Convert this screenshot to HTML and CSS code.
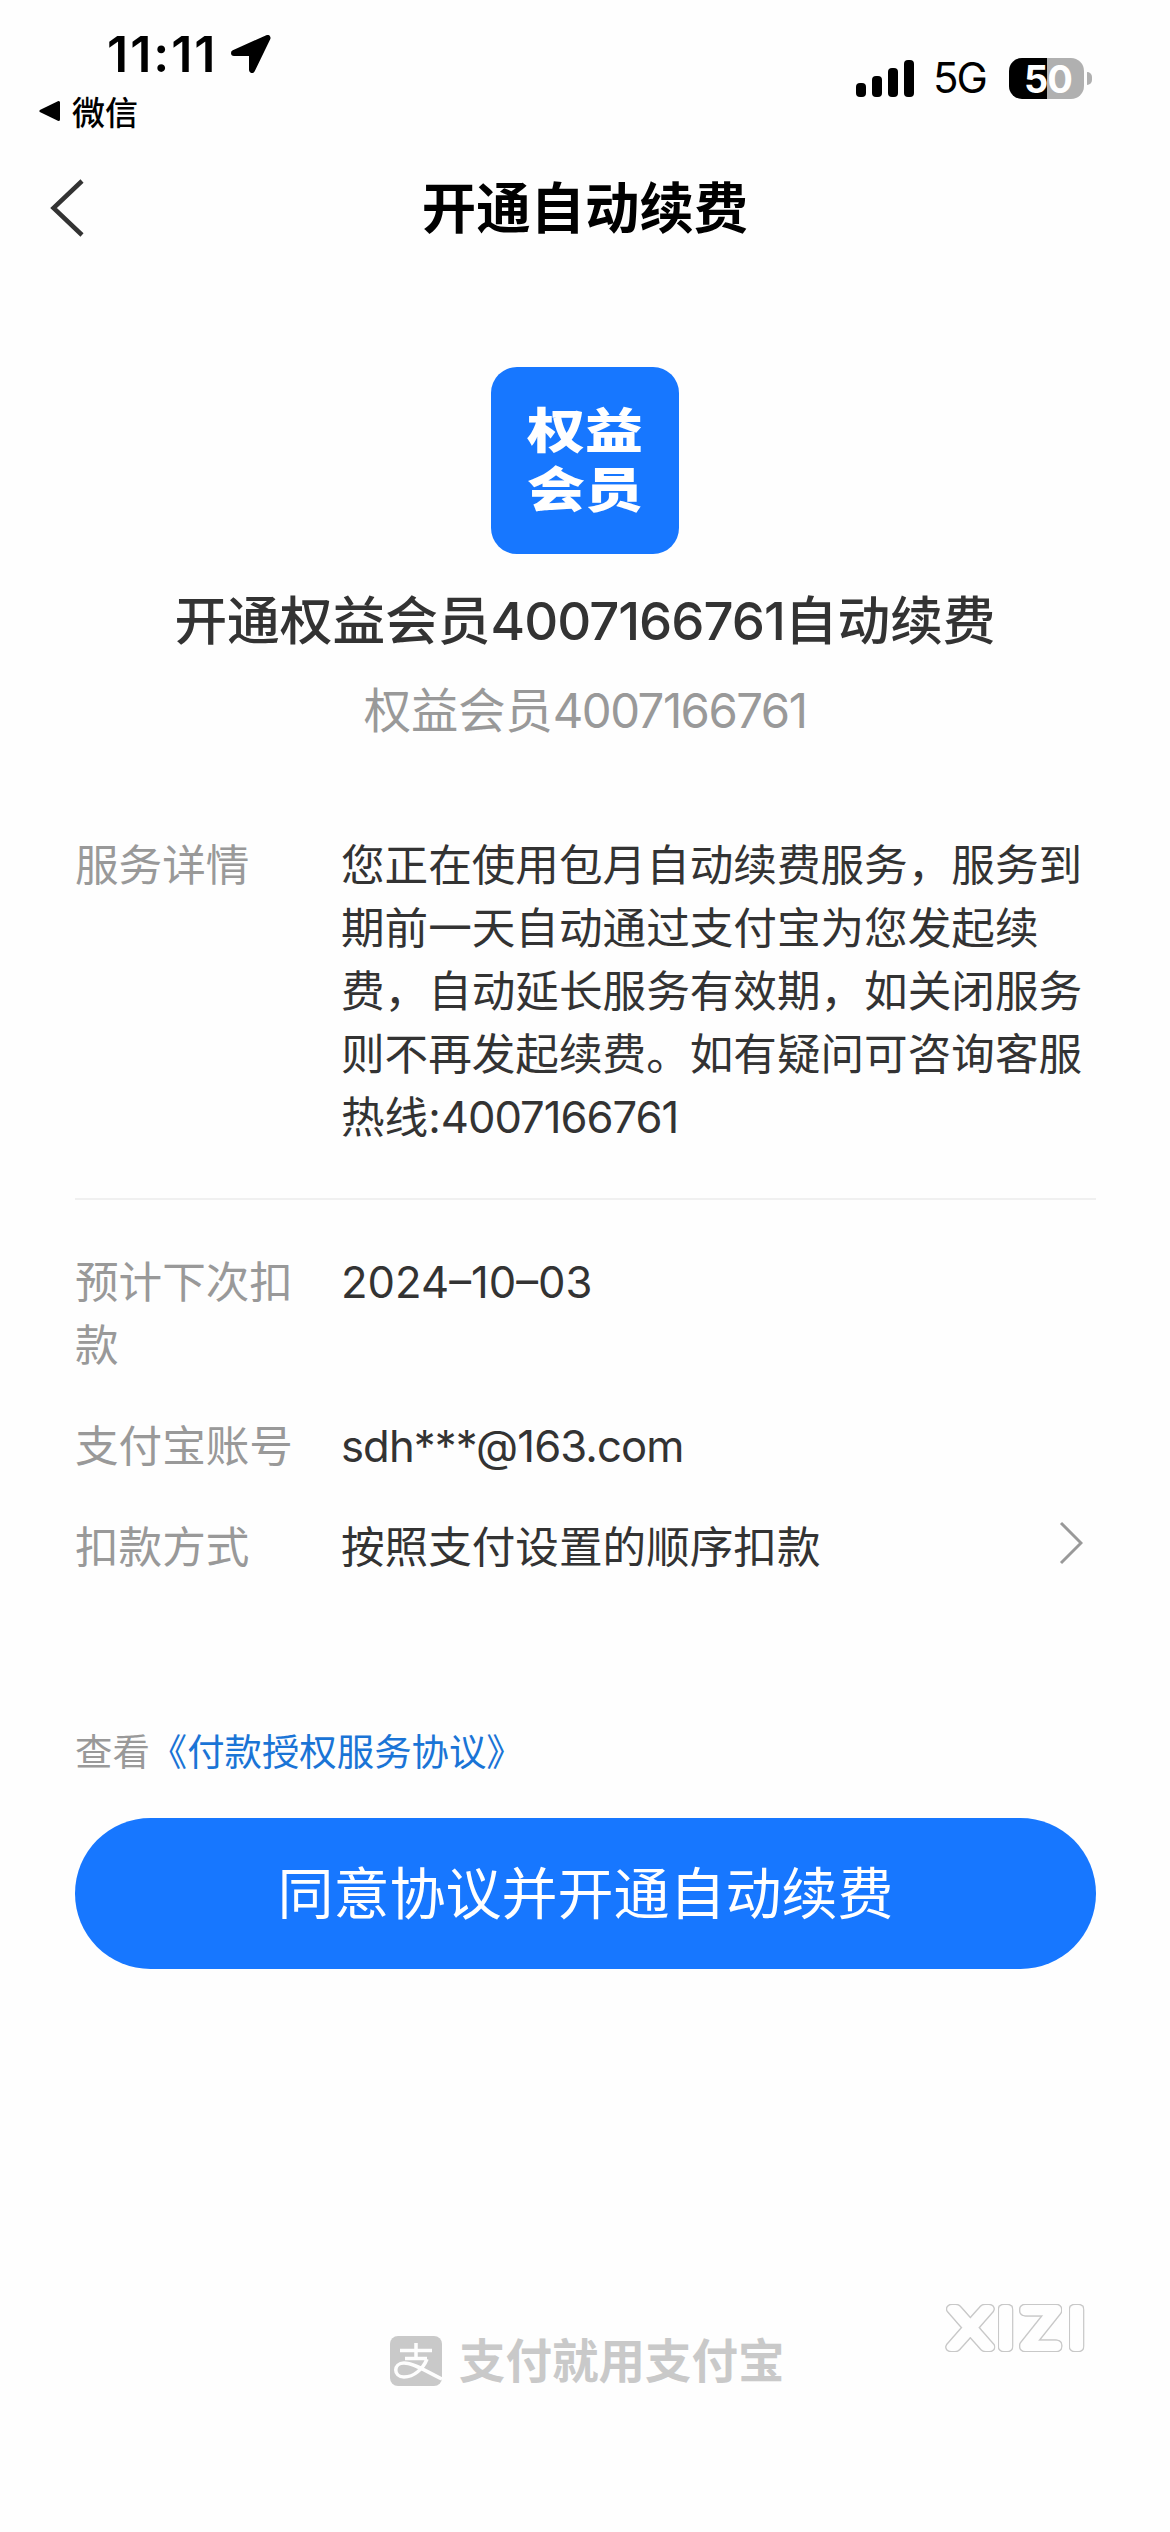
FILE: index.html
```html
<!DOCTYPE html>
<html lang="zh-CN">
<head>
    <meta charset="UTF-8">
    <meta name="viewport" content="width=device-width, initial-scale=1.0">
    <title>开通自动续费</title>
    <link rel="stylesheet" href="styles.css">
</head>
<body>
    <header class="status">
        <div class="status-left">
            <div class="clock">
                <span class="time">11:11</span>
                <svg width="40" height="38" viewBox="0 0 40 38">
                    <path d="M36.500 3 L21 35 V18 H3 Z" fill="#000" stroke="#000" stroke-width="6" stroke-linejoin="round"/>
                </svg>
            </div>
            <div class="back-app">
                <svg width="22" height="22" viewBox="0 0 22 22">
                    <path d="M2 11 L19.500 2.500 V19.500 Z" fill="#000" stroke="#000" stroke-width="3" stroke-linejoin="round"/>
                </svg>
                <span>微信</span>
            </div>
        </div>
        <div class="status-right">
            <div class="signal">
                <i class="bar bar1"></i>
                <i class="bar bar2"></i>
                <i class="bar bar3"></i>
                <i class="bar bar4"></i>
            </div>
            <span class="network">5G</span>
            <div class="battery">50</div>
            <i class="nub"></i>
        </div>
    </header>

    <nav class="navbar">
        <svg class="back" width="36" height="58" viewBox="0 0 36 58">
            <path d="M33 2 L4.500 29 L33 56" fill="none" stroke="#333" stroke-width="4.500"/>
        </svg>
        <h1>开通自动续费</h1>
    </nav>

    <main>
        <section class="product">
            <div class="logo"><span>权益</span><span>会员</span></div>
            <h2>开通权益会员<span class="num">4007166761</span>自动续费</h2>
            <p>权益会员<span class="num">4007166761</span></p>
        </section>

        <section class="details">
            <div class="row">
                <span class="label">服务详情</span>
                <span class="value">您正在使用包月自动续费服务，服务到期前一天自动通过支付宝为您发起续费，自动延长服务有效期，如关闭服务则不再发起续费。如有疑问可咨询客服热线:<span class="num">4007166761</span></span>
            </div>
        </section>

        <section class="details payment">
            <div class="row">
                <span class="label">预计下次扣款</span>
                <span class="value">2024–10–03</span>
            </div>
            <div class="row">
                <span class="label">支付宝账号</span>
                <span class="value account">sdh***@163.com</span>
            </div>
            <div class="row">
                <span class="label">扣款方式</span>
                <span class="value">按照支付设置的顺序扣款</span>
                <svg class="arrow" width="24" height="44" viewBox="0 0 24 44">
                    <path d="M2 2 L22 22 L2 42" fill="none" stroke="#999" stroke-width="3"/>
                </svg>
            </div>
        </section>

        <p class="agreement">查看<a>《付款授权服务协议》</a></p>
        <button class="submit">同意协议并开通自动续费</button>
    </main>

    <footer class="slogan">
        <svg width="53" height="50" viewBox="0 0 53 50">
            <rect width="52" height="50" rx="8" fill="#c9c9c9"/>
            <path d="M10 14.500 H42 M15 22.500 H37 M26 7 V22 M37 23 C33 33 24 41 14 41 C3 41 3 27 14 27 C24 27 37 36 52 43" fill="none" stroke="#fefefe" stroke-width="3.500"/>
        </svg>
        <span>支付就用支付宝</span>
    </footer>

    <svg class="watermark" width="150" height="60" viewBox="0 0 150 60">
        <text x="7.6 45.8 64.6 102.6" y="49" transform="scale(1.25 1)">XIZI</text>
    </svg>
</body>
</html>
```
FILE: styles.css
```css
*{
    margin: 0;
    padding: 0;
    box-sizing: border-box;
}
body{
    position: relative;
    width: 1170px;
    height: 2532px;
    overflow: hidden;
    background-color: #fefefe;
    color: #333;
    font-family: Inter, "Noto Sans CJK SC", sans-serif;
}
svg{
    display: block;
    flex: none;
}
.status{
    height: 136px;
    display: flex;
    justify-content: space-between;
    color: #000;
}
.status-left{
    padding-left: 39px;
}
.clock{
    height: 87px;
    padding: 21px 0 0 68px;
    display: flex;
    align-items: center;
}
.time{
    width: 124px;
    font-size: 50px;
    font-weight: 600;
    line-height: 55px;
    letter-spacing: 2px;
}
.back-app{
    height: 48px;
    display: flex;
    align-items: center;
    gap: 11px;
    font-size: 33px;
    font-weight: 500;
}
.status-right{
    height: 42px;
    margin-top: 57px;
    padding-right: 78px;
    display: flex;
    align-items: center;
}
.signal{
    height: 37px;
    display: flex;
    align-items: flex-end;
    gap: 6px;
}
.bar{
    width: 10px;
    border-radius: 4px;
    background-color: #000;
}
.bar1{ height: 14px; }
.bar2{ height: 21px; }
.bar3{ height: 29px; }
.bar4{ height: 37px; }
.network{
    width: 91px;
    padding-left: 19px;
    font-size: 42px;
    line-height: 42px;
    letter-spacing: -2px;
}
.battery{
    width: 75px;
    height: 41px;
    margin-left: 4px;
    padding-left: 3px;
    border-radius: 13px;
    background: linear-gradient(to right, #000 38px, #b0b0b0 38px);
    color: #fff;
    font-size: 38px;
    font-weight: 700;
    line-height: 42px;
    letter-spacing: -1px;
    text-align: center;
}
.nub{
    width: 5px;
    height: 13px;
    margin-left: 3px;
    border-radius: 0 5px 5px 0;
    background-color: #b0b0b0;
}
.navbar{
    height: 144px;
    display: grid;
    grid-template-columns: 120px 1fr 120px;
    align-items: center;
}
.back{
    margin-left: 49px;
}
.navbar h1{
    color: #000;
    font-size: 54.400px;
    font-weight: 600;
    line-height: 80px;
    text-align: center;
}
.product{
    padding-top: 87px;
    text-align: center;
}
.logo{
    width: 188px;
    height: 187px;
    margin: 0 auto;
    padding-top: 34px;
    border-radius: 26px;
    background-color: #1777ff;
    color: #fff;
    font-size: 58px;
    font-weight: 900;
    line-height: 59px;
}
.logo span{
    display: block;
    transform: scaleY(0.83);
}
.num{
    letter-spacing: -1px;
}
.product h2{
    margin-top: 27px;
    font-size: 52.700px;
    font-weight: 500;
    line-height: 80px;
}
.product p{
    margin-top: 10px;
    color: #999;
    font-size: 47.300px;
    line-height: 80px;
}
.product p .num{
    letter-spacing: -1.500px;
}
.details{
    margin: 0 74px 0 75px;
    padding: 83px 0 11px;
    font-size: 43.600px;
    line-height: 63px;
}
.payment{
    padding: 51px 0 0;
    border-top: 2px solid #f0f0f0;
}
.row{
    display: flex;
    margin-bottom: 38px;
}
.label{
    flex: none;
    width: 225px;
    margin-right: 41px;
    color: #999;
}
.value{
    width: 755px;
}
.account{
    letter-spacing: -0.900px;
}
.arrow{
    margin: 5px 0 0 -37px;
}
.agreement{
    margin: 144px 75px 0;
    color: #999;
    font-size: 37.400px;
    line-height: 60px;
}
.agreement a{
    color: #1a74d6;
}
.submit{
    display: block;
    width: 1021px;
    height: 151px;
    margin: 35px 0 0 75px;
    border: none;
    border-radius: 76px;
    background-color: #1777ff;
    color: #fff;
    font-family: inherit;
    font-size: 56px;
    line-height: 80px;
}
.slogan{
    margin: 362px 0 0 390px;
    display: flex;
    align-items: center;
    gap: 16px;
    color: #c9c9c9;
    font-size: 46.500px;
    font-weight: 700;
    line-height: 60px;
}
.watermark{
    position: absolute;
    left: 940px;
    top: 2298px;
    filter: drop-shadow(1px 0 0 #c8c8c8) drop-shadow(-1px 0 0 #c8c8c8) drop-shadow(0 1px 0 #c8c8c8) drop-shadow(0 -1px 0 #c8c8c8);
}
.watermark text{
    fill: #fefefe;
    stroke: #fefefe;
    stroke-width: 8px;
    stroke-linejoin: round;
    font-family: Inter, sans-serif;
    font-size: 52px;
    font-weight: 200;
}
```
